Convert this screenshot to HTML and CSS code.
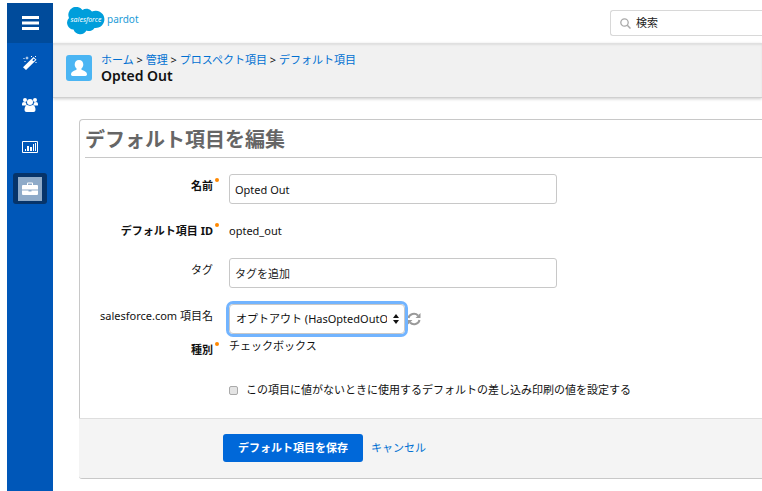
FILE: index.html
```html
<!DOCTYPE html>
<html lang="ja">
<head>
    <meta charset="UTF-8">
    <meta name="viewport" content="width=device-width, initial-scale=1.0">
    <title>Opted Out</title>
    <link rel="stylesheet" href="styles.css">
</head>
<body>
    <nav class="sidebar">
        <button class="menu-toggle" aria-label="メニュー">
            <svg width="17" height="14" viewBox="0 0 17 14"><path d="M0 0h17v3H0zM0 5.500h17v3H0zM0 11h17v3H0z" fill="#fff"/></svg>
        </button>
        <a href="#" class="nav-item" aria-label="マーケティング">
            <svg width="16" height="16" viewBox="0 0 16 16" fill="#fff">
                <path d="M11.500 2l3 2.700L4 15l-3-2.700zM10.300 5.200l1.200 1.100L13.200 4.700l-1.400-1.200z" fill-rule="evenodd"/>
                <path d="M5 1l.5 1.500L7 3l-1.500.5L5 5l-.5-1.500L3 3l1.500-.5zM9 1h1v1H9zM1.500 3h1v1h-1zM2.500 6h1v1h-1zM13.500 7h1v1h-1zM13 1h1v1h-1z"/>
            </svg>
        </a>
        <a href="#" class="nav-item" aria-label="プロスペクト">
            <svg width="16" height="16" viewBox="0 0 16 16" fill="#fff">
                <circle cx="3" cy="3" r="2"/><circle cx="13" cy="3" r="2"/><circle cx="8" cy="5" r="3"/>
                <path d="M0 8V7q0-2 2-2l2 .5Q4.200 7.500 5 8.500H1Q0 8.500 0 8zM16 8V7q0-2-2-2l-2 .5q-.2 2-1 3h4q1 0 1-.5zM2.500 13q0-4.500 3-5 2.500 1.500 5 0 3 .5 3 5 0 2-2 2h-7q-2 0-2-2z"/>
            </svg>
        </a>
        <a href="#" class="nav-item" aria-label="レポート">
            <svg width="16" height="14" viewBox="0 0 16 14" fill="#fff">
                <path d="M1 1h14q1 0 1 1v10q0 1-1 1H1q-1 0-1-1V2q0-1 1-1zM1 2v10h14V2z" fill-rule="evenodd"/>
                <path d="M3 9h1v2H3zM5 6h2v5H5zM8 7h2v4H8zM11 4h1v7h-1zM13 3h1v8h-1z"/>
            </svg>
        </a>
        <a href="#" class="nav-item active" aria-label="管理">
            <span>
                <svg width="16" height="14" viewBox="0 0 16 14" fill="#fff">
                    <path d="M5 3V1.500Q5 .5 6 .5h4q1 0 1 1V3h4q1 0 1 1v3.500H0V4q0-1 1-1zM6 3h4V1.500H6zM0 8.500h6.500v1h3v-1H16V12q0 1-1 1H1q-1 0-1-1z" fill-rule="evenodd"/>
                </svg>
            </span>
        </a>
    </nav>

    <div class="page">
        <header class="topbar">
            <a href="#" class="logo">
                <svg width="40" height="28" viewBox="0 0 40 28">
                    <path d="M16.500 3A7 7 0 0 1 26 4.500 8.700 8.700 0 1 1 28.500 21a6.300 6.300 0 0 1-8 2.500 7.200 7.200 0 0 1-13-1A6.800 6.800 0 0 1 3 11 7.900 7.900 0 0 1 16.500 3z" fill="#009edb"/>
                    <text x="20" y="15" text-anchor="middle" class="cloud-text">salesforce</text>
                </svg>
                <span>pardot</span>
            </a>
            <label class="search">
                <svg width="11" height="11" viewBox="0 0 11 11" fill="none" stroke="#aaa"><circle cx="4.500" cy="4.500" r="3.700" stroke-width="1.300"/><path d="M7.300 7.300L10.500 10.500" stroke-width="1.500"/></svg>
                <input type="search" placeholder="検索" aria-label="検索">
            </label>
        </header>

        <div class="page-header">
            <svg class="prospect-icon" width="26" height="26" viewBox="0 0 26 26">
                <rect width="26" height="26" rx="3" fill="#4bb5f3"/>
                <path d="M13 5c2.700 0 4.300 2 4.300 4.500 0 1.700-.8 3-1.800 4-.4.600-.1 1.200.6 1.500 2.700 1 4.900 2 4.900 4.300 0 1-.7 1.700-1.600 1.700H6.600C5.700 21 5 20.300 5 19.300c0-2.300 2.200-3.300 4.900-4.300.7-.3 1-.9.600-1.500-1-1-1.800-2.300-1.800-4C8.700 7 10.300 5 13 5z" fill="#fff"/>
            </svg>
            <div>
                <div class="breadcrumb">
                    <a href="#">ホーム</a> &gt; <a href="#">管理</a> &gt; <a href="#">プロスペクト項目</a> &gt; <a href="#">デフォルト項目</a>
                </div>
                <h1>Opted Out</h1>
            </div>
        </div>

        <form class="panel">
            <div class="panel-body">
                <h2>デフォルト項目を編集</h2>
                <div class="row">
                    <label class="name required" for="name">名前</label>
                    <input class="text" type="text" id="name" value="Opted Out">
                </div>
                <div class="row id-row">
                    <span class="name required">デフォルト項目 ID</span>
                    <span>opted_out</span>
                </div>
                <div class="row">
                    <label class="name" for="tags">タグ</label>
                    <input class="text" type="text" id="tags" placeholder="タグを追加">
                </div>
                <div class="row select-row">
                    <label class="name" for="crm-field">salesforce.com 項目名</label>
                    <div class="select-wrap">
                        <select id="crm-field">
                            <option>オプトアウト (HasOptedOutOfEmail)</option>
                        </select>
                        <svg class="arrows" width="6" height="10" viewBox="0 0 6 10"><path d="M3 0l3 4H0zM3 10l3-4H0z" fill="#111"/></svg>
                    </div>
                    <button type="button" class="refresh" aria-label="更新">
                        <svg width="14" height="14" viewBox="0 0 14 14" fill="none" stroke="#999" stroke-width="2"><path d="M1.500 6A5.500 5 0 0 1 11 3.500M12.500 8A5.500 5 0 0 1 3 10.500"/><path d="M13.500 1v5h-5zM.5 13V8h5z" fill="#999" stroke="none"/></svg>
                    </button>
                </div>
                <div class="row type-row">
                    <span class="name required">種別</span>
                    <span>チェックボックス</span>
                </div>
                <label class="check-row">
                    <input type="checkbox">
                    <span>この項目に値がないときに使用するデフォルトの差し込み印刷の値を設定する</span>
                </label>
            </div>
            <div class="actions">
                <button type="submit" class="save">デフォルト項目を保存</button>
                <a href="#">キャンセル</a>
            </div>
        </form>
    </div>
</body>
</html>
```
FILE: styles.css
```css
* {
    box-sizing: border-box;
}
body {
    display: flex;
    min-height: 100vh;
    margin: 0;
    padding: 3px 0 0 7px;
    overflow-x: hidden;
    font-family: "Noto Sans", "Noto Sans CJK JP", sans-serif;
    font-size: 11px;
    line-height: 16px;
    color: #111;
    background-color: #fff;
}
button, input, select {
    font: inherit;
    color: inherit;
}
svg {
    display: block;
    flex: none;
}
a {
    color: #0070d2;
    text-decoration: none;
}

/* sidebar */
.sidebar {
    display: flex;
    flex-direction: column;
    align-items: center;
    flex: none;
    width: 46px;
    background-color: #0057b8;
}
.menu-toggle {
    display: flex;
    align-items: center;
    justify-content: center;
    width: 100%;
    height: 40px;
    padding: 0;
    border: none;
    background-color: #004b9b;
}
.nav-item {
    display: flex;
    align-items: center;
    justify-content: center;
    width: 34px;
    height: 31px;
    margin-top: 11px;
    border-radius: 3px;
}
.nav-item:nth-child(2) {
    margin-top: 4px;
}
.nav-item.active {
    background-color: #06346a;
}
.nav-item.active span {
    padding: 5px 4px;
    background-color: #8fabc9;
}

.page {
    flex: 1;
    min-width: 0;
}
.topbar {
    display: flex;
    align-items: center;
    justify-content: space-between;
    height: 40px;
    padding-left: 13px;
}
.logo {
    display: flex;
    gap: 1px;
    margin-bottom: 4px;
    color: #1a9bd7;
    font-size: 10px;
    line-height: 24px;
}
.cloud-text {
    font-size: 7px;
    font-style: italic;
    fill: #fff;
}
.search {
    display: flex;
    align-items: center;
    gap: 5px;
    width: 152px;
    height: 26px;
    padding-left: 9px;
    border: 1px solid #d8d8d8;
    border-right: none;
    border-radius: 3px 0 0 3px;
}
.search input {
    width: 100%;
    min-width: 0;
    padding: 0;
    border: none;
    outline: none;
}
::placeholder {
    color: #222;
    opacity: 1;
}
.page-header {
    display: flex;
    gap: 9px;
    height: 55px;
    padding: 9px 13px;
    background-color: #f1f1f1;
    border-bottom: 1px solid #d0d0d0;
    box-shadow: 0 1px 3px rgba(0, 0, 0, 0.2), inset 0 2px 2px rgba(0, 0, 0, 0.08);
}
.prospect-icon {
    margin-top: 3px;
}
h1 {
    margin: 0;
    font-size: 14px;
    line-height: 16px;
    font-weight: 600;
}

/* edit form */
.panel {
    margin: 21px 0 0 26px;
}
.panel-body {
    padding: 5px 0 20px 5px;
    border: 1px solid #c8c8c8;
    border-width: 1px 0 0 1px;
    border-radius: 4px 0 0 0;
}
h2 {
    margin: 0 0 16px;
    padding-bottom: 2px;
    font-size: 20px;
    line-height: 30px;
    color: #666;
    border-bottom: 1px solid #c8c8c8;
}
.row {
    display: flex;
    margin-bottom: 16px;
}
.name {
    position: relative;
    flex: none;
    width: 128px;
    margin: 4px 16px 0 0;
    text-align: right;
}
.required {
    font-weight: bold;
}
.required::after {
    content: "";
    position: absolute;
    top: 0;
    right: -6px;
    width: 4px;
    height: 4px;
    border-radius: 50%;
    background-color: #f80;
}
.text {
    width: 328px;
    height: 30px;
    padding: 0 5px;
    border: 1px solid #c8c8c8;
    border-radius: 3px;
}
.id-row {
    align-items: center;
    height: 22px;
}
.id-row .name {
    margin-top: 0;
}
.select-row {
    margin-bottom: 4px;
}
.select-wrap {
    position: relative;
    width: 176px;
}
select {
    appearance: none;
    display: block;
    width: 100%;
    height: 30px;
    padding: 0 17px 0 6px;
    border: 1px solid #c8c8c8;
    border-radius: 4px;
    background-color: #fff;
    outline: 3px solid #72b4ff;
}
.arrows {
    position: absolute;
    top: 10px;
    right: 6px;
    pointer-events: none;
}
.refresh {
    margin-left: 2px;
    padding: 0;
    border: none;
    background: none;
}
.type-row {
    margin-bottom: 24px;
}
.check-row {
    display: flex;
    align-items: center;
    gap: 8px;
    margin-left: 144px;
}
.check-row input {
    appearance: none;
    width: 9px;
    height: 9px;
    margin: 0;
    border: 1px solid #aaa;
    border-radius: 2px;
    background-color: #e4e4e4;
}
.actions {
    display: flex;
    align-items: center;
    gap: 8px;
    padding: 15px 0 16px 144px;
    background-color: #f4f4f4;
    border-top: 1px solid #dedede;
    border-bottom: 1px solid #c8c8c8;
    border-radius: 0 0 0 3px;
}
.save {
    height: 28px;
    padding: 0 15px;
    border: none;
    border-radius: 3px;
    font-weight: bold;
    color: #fff;
    background-color: #0068d9;
}
```
